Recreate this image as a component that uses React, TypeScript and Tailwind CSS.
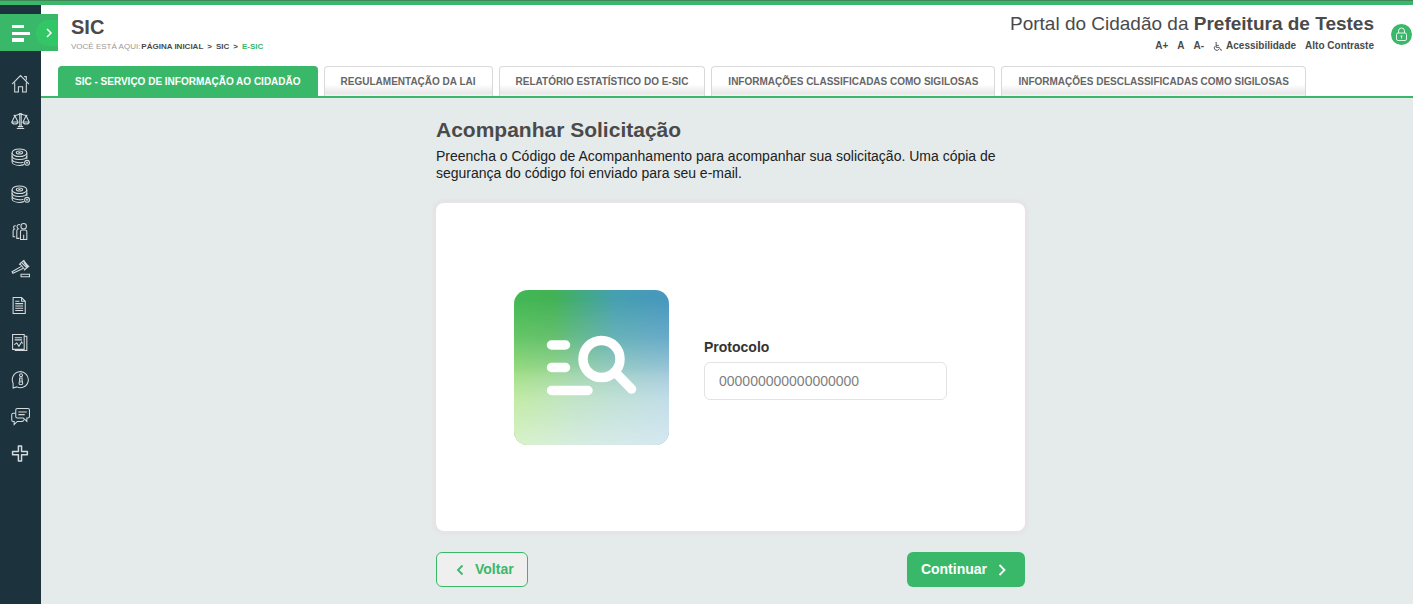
import type { ReactNode } from "react";

const tabs = [
  { label: "SIC - SERVIÇO DE INFORMAÇÃO AO CIDADÃO", active: true },
  { label: "REGULAMENTAÇÃO DA LAI" },
  { label: "RELATÓRIO ESTATÍSTICO DO E-SIC" },
  { label: "INFORMAÇÕES CLASSIFICADAS COMO SIGILOSAS" },
  { label: "INFORMAÇÕES DESCLASSIFICADAS COMO SIGILOSAS" },
];

const coins = (
  <>
    <ellipse cx="8" cy="4.5" rx="7" ry="3.6" />
    <ellipse cx="8" cy="4.3" rx="3" ry="1.4" />
    <path d="M7 4.3h2" />
    <path d="M1 4.5v3c0 2 3 3.4 7 3.4s7-1.4 7-3.4v-3" />
    <path d="M1 7.5v3c0 2 3 3.4 7 3.4 1.500 0 2.700-.2 3.800-.5M15 7.500v3M1 10.500v2.500c0 2 3 3.500 7 3.500 1.700 0 3.300-.3 4.500-.8" />
    <circle cx="15.200" cy="14" r="2.300" />
    <path d="M15.200 13v2M14.200 14h2" />
  </>
);

const menu: { label: string; icon: ReactNode }[] = [
  {
    label: "Início",
    icon: <path d="M1 9.500 9 1.500l8 8M3.500 8v9H7v-5h4v5h3.500V8M12.500 2.500h2v3.500" />,
  },
  {
    label: "Legislação",
    icon: (
      <>
        <path d="M8.300 2v12.500M9.700 2v12.500M5.500 16.500h7M6.500 14.800h5M2.500 4c2 .8 4.500-.5 6.500-1.500 2 1 4.500 2.300 6.500 1.500" />
        <path d="M3.700 4.500.8 10.500h5.800L3.700 4.500ZM14.300 4.500l-2.900 6h5.800l-2.900-6Z" />
        <path d="M.8 10.500c.3 2.300 5.500 2.300 5.800 0M11.400 10.500c.3 2.300 5.500 2.300 5.800 0" />
      </>
    ),
  },
  { label: "Receitas", icon: coins },
  { label: "Despesas", icon: coins },
  {
    label: "Pessoal",
    icon: (
      <>
        <circle cx="12" cy="4" r="2.600" />
        <path d="M10.500 7.500h3c1 0 1.500.7 1.500 1.500v7.500H9V9c0-.8.5-1.500 1.500-1.500ZM12 12v4" />
        <path d="M8.500 2.500c-1.500-.5-2.800.5-2.800 1.800 0 1 .5 1.700 1.300 2.200-1 .3-1.500 1-1.500 2V15.500H8" />
        <path d="M4.500 3.500C3.300 3.300 2.500 4 2.500 5s.3 1.300.8 1.700C2.200 7 2 7.700 2 8.500v5.500h2" />
      </>
    ),
  },
  {
    label: "Licitações",
    icon: (
      <>
        <path d="m8.500 4.500 3.500-3 4.500 5.500-3.500 3-4.500-5.500ZM7.700 5.300l5-4.300M12.300 10.700l5-4.200M10.500 4l4.500 4.500M12 3l3.500 4.500" />
        <path d="M9.800 7 1 12l.8 1.500 9.500-4.500M9.500 14.500h8v2.300h-8z" />
      </>
    ),
  },
  {
    label: "Contratos",
    icon: (
      <>
        <path d="M2 1.500h8L13.500 5v11.500H2v-15ZM10 1.500V5h3.500" />
        <path d="M4 5h4M4 7.200h7.500M4 9.400h7.500M4 11.600h7.500M4 13.800h7.500" />
      </>
    ),
  },
  {
    label: "Relatórios",
    icon: (
      <>
        <path d="M1.500 1.500h11v14h-11zM12.500 3H15v13.500H3.500" />
        <path d="M3.500 4.500h7M3.500 6.500h7M3 11l2.500-1.500 2 3L10 8.500l1 1.500" />
      </>
    ),
  },
  {
    label: "Informações",
    icon: (
      <>
        <path d="M2 17v-4.500A7.600 7.600 0 1 1 5.500 16Z" />
        <circle cx="9.500" cy="5" r="1.400" />
        <path d="M8.200 7.500h2.300v2l.6 3.300c0 1.600-3.500 1.600-3.500 0l.6-3.300zM9.400 10v2" />
      </>
    ),
  },
  {
    label: "Ouvidoria",
    icon: (
      <>
        <path d="M6 1.500h10c1 0 1.500.5 1.500 1.500v6c0 1-.5 1.500-1.500 1.500h-1v3l-3.500-3H6c-1 0-1.500-.5-1.500-1.500V3c0-1 .5-1.500 1.500-1.500ZM7 4.800h8M7 7.200h6" />
        <path d="M4.500 6H2C1 6 .7 6.500.7 7.500v4.700c0 1 .5 1.500 1.300 1.500h1v2.800l3-2.800h4.500c.8 0 1.300-.5 1.500-1.500" />
      </>
    ),
  },
  {
    label: "Mais",
    icon: (
      <path
        strokeWidth="1.400"
        strokeLinejoin="round"
        d="M7 2h3v5h5.500v3.200H10V16H7v-5.800H1.500V7H7V2Z"
      />
    ),
  },
];

function Sidebar() {
  return (
    <aside className="relative z-10 w-[41px] shrink-0 bg-[#1c323c] pt-[9px]">
      <button
        type="button"
        aria-label="Abrir menu"
        className="flex h-[37px] w-[58px] items-center bg-[#3ab86a] pl-3"
      >
        <svg width="18" height="18" viewBox="0 0 18 18" fill="#fff">
          <path d="M0 1h12v3H0zM0 8h18v3H0zM0 14h12v4H0z" />
        </svg>
        <span className="ml-[6px] flex h-[26px] flex-1 items-center justify-center rounded-l-full bg-[#33c666] pl-1">
          <svg width="8" height="10" viewBox="0 0 8 10" fill="none" stroke="#fff" strokeWidth="1.500">
            <path d="m2 1 4 4-4 4" />
          </svg>
        </span>
      </button>
      <nav className="pt-[14px]">
        <ul>
          {menu.map((m) => (
            <li key={m.label}>
              <a href="#" aria-label={m.label} className="flex h-[37px] items-center pl-[11px]">
                <svg
                  width="19"
                  height="19"
                  viewBox="0 0 18 18"
                  fill="none"
                  stroke="#d5dbdd"
                  strokeWidth="1"
                >
                  {m.icon}
                </svg>
              </a>
            </li>
          ))}
        </ul>
      </nav>
    </aside>
  );
}

function Header() {
  return (
    <header className="border-b-2 border-[#3ab86a] bg-white">
      <div className="flex h-[61px] justify-between pl-[30px]">
        <div className="pt-[10px]">
          <h1 className="text-[20px] leading-[24px] font-bold text-[#4a4a4a]">SIC</h1>
          <nav aria-label="Trilha" className="mt-[2px] flex text-[8px] leading-[12px] text-[#999]">
            VOCÊ ESTÁ AQUI:
            <ul className="ml-px flex gap-1 font-bold text-[#4a4a4a]">
              <li><a href="#">PÁGINA INICIAL</a></li>
              <li>&gt;</li>
              <li><a href="#">SIC</a></li>
              <li>&gt;</li>
              <li><a href="#" className="text-[#3ab86a]">E-SIC</a></li>
            </ul>
          </nav>
        </div>
        <div className="flex gap-[17px]">
          <div className="pt-[7px] text-right text-[#4a4a4a]">
            <p className="text-[19px] leading-[24px]">
              Portal do Cidadão da <b>Prefeitura de Testes</b>
            </p>
            <ul className="mt-[3px] flex justify-end gap-[9px] text-[10px] leading-[14px] font-bold">
              <li><a href="#">A+</a></li>
              <li><a href="#">A</a></li>
              <li><a href="#">A-</a></li>
              <li>
                <a href="#" className="flex items-center gap-1">
                  <svg width="9" height="9" viewBox="0 0 10 10" fill="none" stroke="currentColor" strokeWidth="1">
                    <circle cx="3.500" cy="1" r=".5" />
                    <path d="M3.500 2v4H7l1.500 3H10M3.500 3.800h3M2.500 4.500a2.700 2.700 0 1 0 4 3.500" />
                  </svg>
                  Acessibilidade
                </a>
              </li>
              <li><a href="#">Alto Contraste</a></li>
            </ul>
          </div>
          <button
            type="button"
            aria-label="Área restrita"
            className="mt-[19px] mr-px flex size-[21px] items-center justify-center rounded-full bg-[#3ab86a]"
          >
            <svg width="13" height="15" viewBox="0 0 13 15" fill="none" stroke="#dff5e7" strokeWidth="1">
              <rect x="1.500" y="6" width="10" height="7.500" rx="1.500" />
              <path d="M3.500 6V4a3 3 0 0 1 6 0v2M6.500 9v2.500M5.500 9h2" />
            </svg>
          </button>
        </div>
      </div>
      <ul className="flex gap-[6px] pl-[17px]">
        {tabs.map((t) => (
          <li key={t.label}>
            <a
              href="#"
              className={`block h-[30px] rounded-t-[4px] border border-b-0 px-4 text-[10px] leading-[29px] font-bold whitespace-nowrap ${
                t.active
                  ? "border-[#3ab86a] bg-[#3ab86a] text-white"
                  : "border-[#d9d9d9] bg-linear-to-b from-white from-60% via-[#e8e8e8] via-90% to-[#f4f4f4] text-[#666]"
              }`}
            >
              {t.label}
            </a>
          </li>
        ))}
      </ul>
    </header>
  );
}

function SearchArt() {
  return (
    <svg width="155" height="155" viewBox="0 0 155 155" className="shrink-0">
      <defs>
        <linearGradient id="top">
          <stop offset="0" stopColor="#43b854" />
          <stop offset=".25" stopColor="#42b254" />
          <stop offset=".65" stopColor="#45a0b0" />
          <stop offset="1" stopColor="#4797bf" />
        </linearGradient>
        <linearGradient id="middle">
          <stop offset="0" stopColor="#b4e68e" />
          <stop offset=".4" stopColor="#b4deb8" />
          <stop offset="1" stopColor="#b5d5e2" />
        </linearGradient>
        <linearGradient id="bottom">
          <stop offset="0" stopColor="#d8f2ca" />
          <stop offset=".5" stopColor="#d6ebe5" />
          <stop offset="1" stopColor="#d5e8f1" />
        </linearGradient>
        <linearGradient id="fadeA" x1="0" y1="0" x2="0" y2="1">
          <stop offset=".05" stopColor="#fff" stopOpacity="0" />
          <stop offset=".3" stopColor="#fff" stopOpacity=".3" />
          <stop offset=".55" stopColor="#fff" stopOpacity=".82" />
          <stop offset=".72" stopColor="#fff" />
        </linearGradient>
        <linearGradient id="fadeB" x1="0" y1="0" x2="0" y2="1">
          <stop offset=".5" stopColor="#fff" stopOpacity="0" />
          <stop offset="1" stopColor="#fff" />
        </linearGradient>
        <mask id="maskA" style={{ maskType: "alpha" }}><rect width="155" height="155" fill="url(#fadeA)" /></mask>
        <mask id="maskB" style={{ maskType: "alpha" }}><rect width="155" height="155" fill="url(#fadeB)" /></mask>
        <clipPath id="tile"><rect width="155" height="155" rx="14" /></clipPath>
      </defs>
      <g clipPath="url(#tile)">
        <rect width="155" height="155" fill="url(#top)" />
        <rect width="155" height="155" fill="url(#middle)" mask="url(#maskA)" />
        <rect width="155" height="155" fill="url(#bottom)" mask="url(#maskB)" />
      </g>
      <g fill="none" stroke="#fff" strokeWidth="9.500" strokeLinecap="round">
        <path d="M37.500 55H51.500M37.500 77.500H51.500M37.500 100.500H74" />
        <circle cx="87.500" cy="69" r="18.500" />
        <path d="m101 82 16.500 17" />
      </g>
    </svg>
  );
}

export default function App() {
  return (
    <div className="flex min-h-screen flex-col bg-[#e5ebeb] font-['Liberation_Sans',Arial,sans-serif]">
      <div className="h-[5px] border-t border-[#3f8659] bg-[#3ab86a]" />
      <div className="flex flex-1">
        <Sidebar />
        <div className="min-w-0 flex-1">
          <Header />
          <main className="pt-5 pb-4 pl-[7px]">
            <div className="mx-auto max-w-[589px]">
              <h2 className="text-[21px] leading-[24px] font-bold text-[#4a4a4a]">Acompanhar Solicitação</h2>
              <p className="mt-[6px] text-[14px] leading-[17px] text-[#212121]">
                Preencha o Código de Acompanhamento para acompanhar sua solicitação. Uma cópia de
                segurança do código foi enviado para seu e-mail.
              </p>
              <form>
                <div className="mt-[21px] flex min-h-[328px] items-center justify-center gap-[35px] rounded-lg bg-white shadow-[0_0_2px_4px_#e5e5e7]">
                  <SearchArt />
                  <div className="pt-1">
                    <label htmlFor="protocolo" className="block text-[14px] leading-[17px] font-bold text-[#333]">
                      Protocolo
                    </label>
                    <input
                      id="protocolo"
                      type="text"
                      placeholder="000000000000000000"
                      className="mt-[6px] h-[38px] w-[243px] rounded-md border border-[#e3e3e3] px-[14px] text-[14px] placeholder:text-[#808080]"
                    />
                  </div>
                </div>
                <div className="mt-[21px] flex justify-between text-[14px] font-bold">
                  <button
                    type="button"
                    className="flex h-[35px] items-center gap-[11px] rounded-md border border-[#3ab86a] bg-[#efefef] pr-[13px] pl-[19px] text-[#3ab86a]"
                  >
                    <svg width="8" height="12" viewBox="0 0 8 12" fill="none" stroke="currentColor" strokeWidth="1.800">
                      <path d="M6.500 1.500 2 6l4.500 4.500" />
                    </svg>
                    Voltar
                  </button>
                  <button
                    type="submit"
                    className="flex h-[35px] items-center gap-[11px] rounded-md bg-[#3ab86a] pr-[19px] pl-[14px] text-white"
                  >
                    Continuar
                    <svg width="8" height="12" viewBox="0 0 8 12" fill="none" stroke="currentColor" strokeWidth="1.800">
                      <path d="M1.500 1 6.500 6l-5 5" />
                    </svg>
                  </button>
                </div>
              </form>
            </div>
          </main>
        </div>
      </div>
    </div>
  );
}
